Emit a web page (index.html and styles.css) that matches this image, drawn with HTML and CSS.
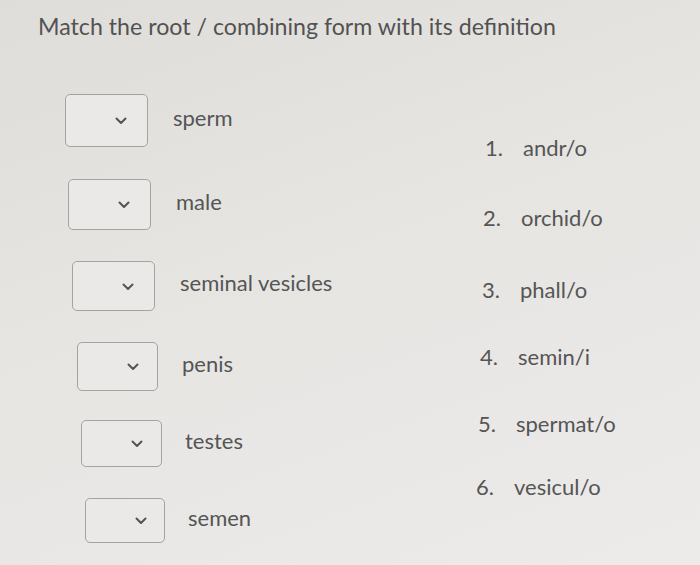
FILE: index.html
```html
<!DOCTYPE html>
<html lang="en">
<head>
    <meta charset="UTF-8">
    <meta name="viewport" content="width=device-width, initial-scale=1.0">
    <title>Match</title>
    <link rel="stylesheet" href="styles.css">
</head>
<body>
    <div class="page">
        <h1>Match the root / combining form with its definition</h1>
        <div class="match">
            <div class="terms">
                <div class="row"><div class="pick"><svg width="12" height="8" viewBox="0 0 12 8"><polyline points="1.5,1.5 6,6 10.5,1.5" /></svg></div><span>sperm</span></div>
                <div class="row"><div class="pick"><svg width="12" height="8" viewBox="0 0 12 8"><polyline points="1.5,1.5 6,6 10.5,1.5" /></svg></div><span>male</span></div>
                <div class="row"><div class="pick"><svg width="12" height="8" viewBox="0 0 12 8"><polyline points="1.5,1.5 6,6 10.5,1.5" /></svg></div><span>seminal vesicles</span></div>
                <div class="row"><div class="pick"><svg width="12" height="8" viewBox="0 0 12 8"><polyline points="1.5,1.5 6,6 10.5,1.5" /></svg></div><span>penis</span></div>
                <div class="row"><div class="pick"><svg width="12" height="8" viewBox="0 0 12 8"><polyline points="1.5,1.5 6,6 10.5,1.5" /></svg></div><span>testes</span></div>
                <div class="row"><div class="pick"><svg width="12" height="8" viewBox="0 0 12 8"><polyline points="1.5,1.5 6,6 10.5,1.5" /></svg></div><span>semen</span></div>
            </div>
            <ol class="roots">
                <li><span class="num">1.</span>andr/o</li>
                <li><span class="num">2.</span>orchid/o</li>
                <li><span class="num">3.</span>phall/o</li>
                <li><span class="num">4.</span>semin/i</li>
                <li><span class="num">5.</span>spermat/o</li>
                <li><span class="num">6.</span>vesicul/o</li>
            </ol>
        </div>
    </div>
</body>
</html>
```

FILE: styles.css
```css
body {
    margin: 0;
    padding: 0;
    font-family: Lato, "Open Sans", sans-serif;
    color: #555555;
    background: linear-gradient(160deg, #dfddd9 0%, #e6e5e2 45%, #ecebea 100%);
    height: 565px;
    overflow: hidden;
}

.page {
    padding: 12px 0 0 38px;
}

h1 {
    margin: 0;
    font-size: 23.2px;
    font-weight: normal;
    color: #525252;
}

.match {
    display: flex;
}

.terms {
    width: 438px;
    margin-top: 37px;
}

.row {
    display: flex;
    align-items: center;
    height: 80px;
    font-size: 22px;
}

.row span {
    margin-top: -6px;
}

/* the photo is slanted: rows drift right and get closer together */
.row:nth-child(1) { margin-left: 27px; height: 86px; }
.row:nth-child(2) { margin-left: 30px; height: 82px; }
.row:nth-child(3) { margin-left: 34px; height: 81px; }
.row:nth-child(4) { margin-left: 39px; height: 80px; }
.row:nth-child(5) { margin-left: 43px; height: 74px; }
.row:nth-child(6) { margin-left: 47px; height: 80px; }

.pick {
    box-sizing: border-box;
    width: 83px;
    height: 50px;
    border: 1.5px solid #a3a3a1;
    border-radius: 5px;
    background-color: #eae9e7;
    display: flex;
    align-items: center;
    padding-left: 49px;
    margin-right: 25px;
}

.row:nth-child(1) .pick { height: 53px; }
.row:nth-child(2) .pick { height: 51px; }
.row:nth-child(4) .pick { height: 49px; width: 81px; margin-right: 24px; }
.row:nth-child(5) .pick { height: 47px; width: 81px; margin-right: 23px; }
.row:nth-child(6) .pick { height: 45px; width: 80px; margin-right: 23px; }

.pick svg {
    margin-top: 2px;
}

.pick polyline {
    fill: none;
    stroke: #555555;
    stroke-width: 2;
    stroke-linecap: round;
    stroke-linejoin: round;
}

.roots {
    list-style: none;
    margin: 73px 0 0 0;
    padding: 0;
    font-size: 22px;
}

.roots li {
    height: 68px;
    display: flex;
    align-items: center;
}

.num {
    display: inline-block;
    width: 38px;
}

.roots li:nth-child(1) { margin-left: 9px; height: 68px; }
.roots li:nth-child(2) { margin-left: 7px; height: 72px; }
.roots li:nth-child(3) { margin-left: 6px; height: 72px; }
.roots li:nth-child(4) { margin-left: 4px; height: 62px; }
.roots li:nth-child(5) { margin-left: 2px; height: 72px; }
.roots li:nth-child(6) { margin-left: 0; height: 54px; }
```
